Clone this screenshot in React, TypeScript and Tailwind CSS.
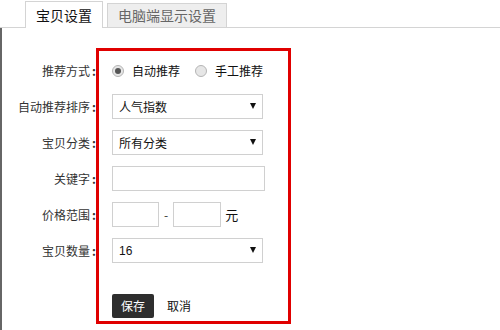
import React from "react";

const Arrow = () => (
  <svg width="6" height="6" viewBox="0 0 6 6" className="absolute right-[6px] top-[8px]">
    <polygon points="0,0 6,0 3,6" fill="#111" />
  </svg>
);

const Select = ({ value }: { value: string }) => (
  <div className="relative w-[151px] h-[25px] border border-[#d0d0d0] bg-white flex items-center pl-[6px] text-[12px] text-[#111]">
    {value}
    <Arrow />
  </div>
);

const Radio = ({ checked, label }: { checked?: boolean; label: string }) => (
  <div className="flex items-center">
    <div className="w-[12px] h-[12px] rounded-full border border-[#b5b5b5] bg-[#e6e6e6] flex items-center justify-center">
      {checked && <div className="w-[6px] h-[6px] rounded-full bg-[#555]" />}
    </div>
    <span className="ml-[8px] text-[12px] text-[#111]">{label}</span>
  </div>
);

export default function App() {
  const labels = ["推荐方式", "自动推荐排序", "宝贝分类", "关键字", "价格范围", "宝贝数量"];
  return (
    <div
      className="w-[500px] h-[330px] bg-white flex flex-col overflow-hidden"
      style={{ fontFamily: '"Noto Sans CJK SC", "Liberation Sans", sans-serif' }}
    >
      <div className="h-[28px] shrink-0 flex items-end border-b border-[#d4d4d4] pl-[25px] gap-[4px]">
        <div className="h-[27px] w-[78px] -mb-px border border-b-0 border-[#d4d4d4] bg-white flex items-center justify-center text-[14px] text-[#111]">
          宝贝设置
        </div>
        <div className="h-[24px] w-[120px] border border-b-0 border-[#d4d4d4] bg-[#eeeeee] flex items-center justify-center text-[14px] text-[#666]">
          电脑端显示设置
        </div>
      </div>
      <div className="flex-1 flex border-l-2 border-[#666]">
        <div className="w-[94px] pt-[30px] flex flex-col gap-[11px]">
          {labels.map((l) => (
            <div key={l} className="h-[25px] flex items-center justify-end text-[12px] text-[#333]">
              {l}
              <span className="ml-[2px] font-bold">:</span>
            </div>
          ))}
        </div>
        <div className="mt-[20px] w-[195px] h-[276px] border-[3px] border-[#e00000] pt-[7px] pl-[13px] flex flex-col">
          <div className="flex flex-col gap-[11px]">
            <div className="h-[25px] flex items-center gap-[15px]">
              <Radio checked label="自动推荐" />
              <Radio label="手工推荐" />
            </div>
            <Select value="人气指数" />
            <Select value="所有分类" />
            <div className="w-[153px] h-[25px] border border-[#d0d0d0] bg-white" />
            <div className="h-[25px] flex items-center">
              <div className="w-[47px] h-[25px] border border-[#d0d0d0]" />
              <span className="mx-[5px] text-[12px] text-[#333]">-</span>
              <div className="w-[48px] h-[25px] border border-[#d0d0d0]" />
              <span className="ml-[4px] text-[13px] text-[#111]">元</span>
            </div>
            <div className="relative w-[151px] h-[25px] border border-[#d0d0d0] bg-white flex items-center pl-[6px] text-[12px] text-[#111]" style={{ fontFamily: '"Liberation Sans", sans-serif' }}>
              16
              <Arrow />
            </div>
          </div>
          <div className="mt-[31px] flex items-center">
            <div className="w-[42px] h-[24px] rounded-[2px] bg-[#2e2e2e] text-white text-[12px] flex items-center justify-center">
              保存
            </div>
            <span className="ml-[13px] text-[12px] text-[#111]">取消</span>
          </div>
        </div>
      </div>
    </div>
  );
}
